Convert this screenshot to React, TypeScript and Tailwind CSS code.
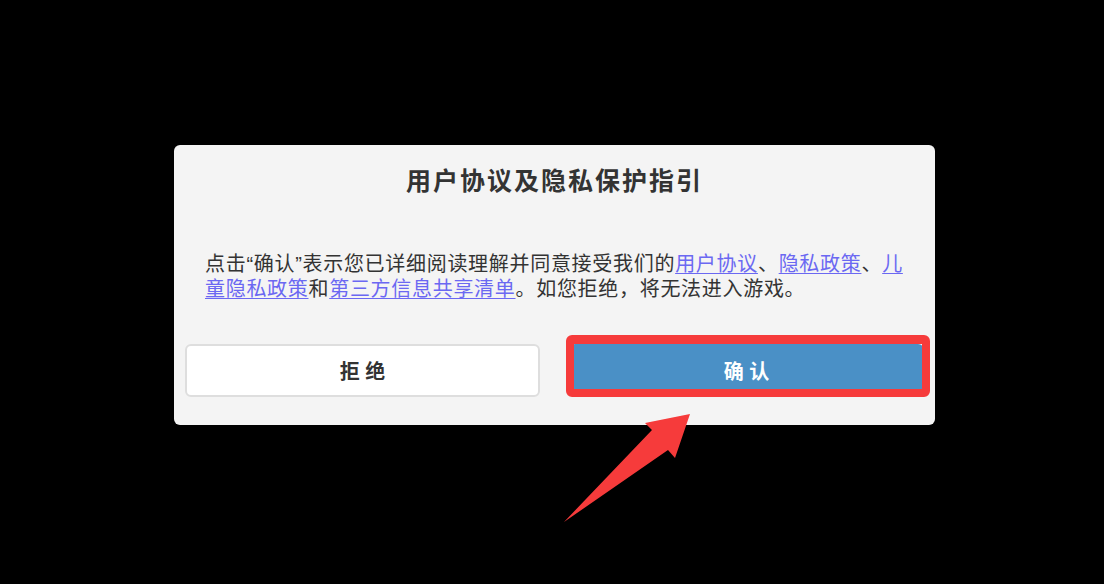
import React from 'react'

const font = { fontFamily: '"Liberation Sans", "Noto Sans CJK SC", sans-serif' }

const links = {
  terms: '用户协议',
  privacy: '隐私政策',
  child: '儿童隐私政策',
  share: '第三方信息共享清单',
}

function Link({ children }: { children: React.ReactNode }) {
  return <a href="#" className="text-[#6b68f2] underline underline-offset-2 decoration-1">{children}</a>
}

export default function App() {
  return (
    <div className="relative w-full h-[584px] bg-black overflow-hidden" style={font}>
      <div className="flex justify-center pt-[145px] pl-[5px]">
        {/* consent dialog */}
        <div className="relative w-[761px] rounded-[6px] bg-[#f4f4f4] px-[11px] pb-[28px]">
          <h2 className="pt-[20px] text-center text-[25px] leading-[32px] font-bold tracking-[2px] text-[#333]">
            用户协议及隐私保护指引
          </h2>
          <p className="mt-[55px] pl-[20px] pr-[12px] text-[20px] leading-[25px] tracking-[0.7px] text-[#333]">
            点击“确认”表示您已详细阅读理解并同意接受我们的<Link>{links.terms}</Link>、<Link>{links.privacy}</Link>、<Link>{links.child}</Link>和<Link>{links.share}</Link>。如您拒绝，将无法进入游戏。
          </p>
          <div className="mt-[42px] grid grid-cols-2 gap-[29px]">
            <button className="h-[53px] pt-[3px] rounded-[6px] border-2 border-[#dedede] bg-white text-[20px] font-bold text-[#333]">
              拒 绝
            </button>
            <button className="h-[53px] pt-[3px] rounded-[6px] bg-[#4a90c6] text-[20px] font-bold text-white">
              确 认
            </button>
          </div>
          {/* highlight around the confirm button */}
          <div className="absolute left-[392px] top-[190px] w-[364px] h-[62px] rounded-[6px] border-[8px] border-t-[9px] border-[#f63b3b]" />
        </div>
      </div>
      <svg className="absolute left-0 top-0" width="1104" height="584" viewBox="0 0 1104 584">
        <polygon points="690,414 645,423 652,430 564,522 668,450 675,458" fill="#f63b3b" />
      </svg>
    </div>
  )
}
